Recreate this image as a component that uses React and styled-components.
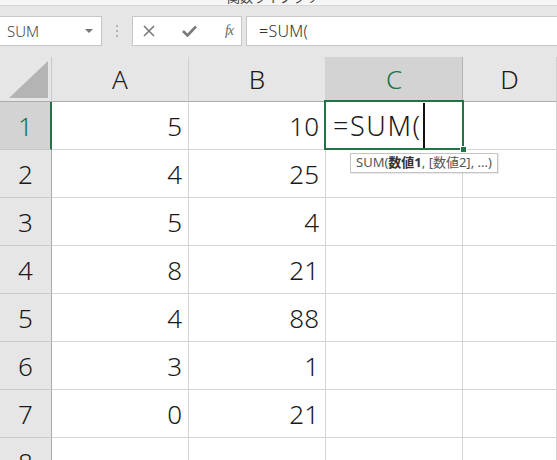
import React from "react";
import styled, { createGlobalStyle } from "styled-components";

const GlobalStyle = createGlobalStyle`
  html, body {
    margin: 0;
    padding: 0;
    background: #ffffff;
    overflow: hidden;
  }
  body {
    font-family: "Noto Sans", "Noto Sans CJK JP", sans-serif;
    color: #222;
  }
`;

const GREEN = "#217346";

const Window = styled.div`
  width: 557px;
  height: 460px;
  overflow: hidden;
  display: flex;
  flex-direction: column;
`;

const TitleStrip = styled.div`
  height: 5px;
  flex: none;
  background: #f6f6f6;
  border-bottom: 1px solid #d6d6d6;
  overflow: hidden;
  padding-left: 227px;

  span {
    display: block;
    margin-top: -10px;
    font-family: "Noto Sans CJK JP", sans-serif;
    font-size: 13px;
    line-height: 14px;
    color: #444;
  }
`;

const FormulaBar = styled.div`
  height: 51px;
  flex: none;
  box-sizing: border-box;
  background: #e6e6e6;
  padding-top: 10px;
  display: flex;
  align-items: flex-start;
`;

const Box = styled.div`
  height: 30px;
  box-sizing: border-box;
  background: #fff;
  border: 1px solid #c6c6c6;
  display: flex;
  align-items: center;
`;

const NameBox = styled(Box)`
  width: 102px;
  border-left: none;
  padding: 0 6px 0 7px;
  justify-content: space-between;
  font-size: 15px;
  font-weight: 300;
  color: #444;

  i {
    width: 0;
    height: 0;
    border-left: 4px solid transparent;
    border-right: 4px solid transparent;
    border-top: 4px solid #777;
    margin-right: 2px;
  }
`;

const Grip = styled.div`
  width: 30px;
  height: 30px;
  display: flex;
  flex-direction: column;
  align-items: center;
  justify-content: center;
  gap: 3px;

  b {
    width: 2px;
    height: 2px;
    background: #b3b3b3;
  }
`;

const FxBox = styled(Box)`
  width: 110px;
  padding: 0 8px 0 10px;
  justify-content: space-between;
  color: #777;

  em {
    font-family: "Liberation Serif", serif;
    font-style: italic;
    font-size: 14px;
    color: #666;
    letter-spacing: -1px;
  }
`;

const FormulaInput = styled(Box)`
  flex: 1;
  margin-left: 4px;
  border-right: none;
  padding-left: 12px;
  font-size: 16px;
  font-weight: 300;
  color: #333;
  letter-spacing: 0.3px;
`;

const Sheet = styled.div`
  display: grid;
  grid-template-columns: 52px 137px 137px 137px 1fr;
  grid-template-rows: 45px;
  grid-auto-rows: 48px;
  font-size: 26px;
  font-weight: 300;
  color: #1a1a1a;
`;

const Corner = styled.div`
  background: #e6e6e6;
  box-sizing: border-box;
  border-right: 1px solid #c9c9c9;
  border-bottom: 1px solid #ababab;
  display: flex;
  align-items: flex-end;
  justify-content: flex-end;
  padding: 0 3px 3px 0;
`;

const ColHeader = styled.div`
  box-sizing: border-box;
  background: ${(p) => (p.$selected ? "#d3d3d3" : "#e6e6e6")};
  color: ${(p) => (p.$selected ? GREEN : "#1a1a1a")};
  border-right: 1px solid ${(p) => (p.$selected ? "#b5b5b5" : "#d0d0d0")};
  border-bottom: ${(p) => (p.$selected ? `2px solid ${GREEN}` : "1px solid #ababab")};
  display: flex;
  align-items: center;
  justify-content: center;
  padding-top: ${(p) => (p.$selected ? "1px" : "0")};
`;

const RowHeader = styled.div`
  box-sizing: border-box;
  background: ${(p) => (p.$selected ? "#d3d3d3" : "#e6e6e6")};
  color: ${(p) => (p.$selected ? GREEN : "#1a1a1a")};
  border-right: ${(p) => (p.$selected ? `2px solid ${GREEN}` : "1px solid #ababab")};
  border-bottom: 1px solid #c9c9c9;
  display: flex;
  align-items: center;
  justify-content: center;
  padding-left: ${(p) => (p.$selected ? "1px" : "0")};
`;

const Cell = styled.div`
  box-sizing: border-box;
  border-right: 1px solid #d4d4d4;
  border-bottom: 1px solid #d4d4d4;
  display: flex;
  align-items: center;
  justify-content: flex-end;
  padding-right: 6px;
`;

const ActiveCell = styled(Cell)`
  position: relative;
  justify-content: flex-start;
  padding: 0 0 0 7px;
  font-size: 27px;
  letter-spacing: 1.6px;
`;

const ActiveFrame = styled.div`
  position: absolute;
  top: -2px;
  left: -2px;
  right: -2px;
  bottom: -1px;
  border: 2px solid ${GREEN};
  pointer-events: none;
`;

const FillHandle = styled.div`
  position: absolute;
  right: -5px;
  bottom: -4px;
  width: 5px;
  height: 5px;
  background: ${GREEN};
  border: 1px solid #fff;
`;

const Caret = styled.span`
  display: inline-block;
  width: 2px;
  height: 45px;
  background: #111;
  margin-left: 1px;
  align-self: flex-end;
  margin-bottom: 1px;
`;

const Tooltip = styled.div`
  position: absolute;
  left: 24px;
  top: 51px;
  z-index: 2;
  white-space: nowrap;
  background: #fff;
  border: 1px solid #c4c4c4;
  box-shadow: 1px 1px 1px rgba(0, 0, 0, 0.08);
  padding: 1px 5px 2px 5px;
  font-size: 13px;
  font-weight: 400;
  line-height: 15px;
  letter-spacing: 0;
  color: #555;
  font-family: "Noto Sans", "Noto Sans CJK JP", sans-serif;

  b {
    color: #333;
  }
`;

const data = [
  [5, 10],
  [4, 25],
  [5, 4],
  [8, 21],
  [4, 88],
  [3, 1],
  [0, 21],
  ["", ""],
];

const columns = ["A", "B", "C", "D"];

const CloseIcon = () => (
  <svg width="12" height="12" viewBox="0 0 12 12">
    <path d="M1 1 L11 11 M11 1 L1 11" stroke="#7a7a7a" strokeWidth="1.6" fill="none" />
  </svg>
);

const CheckIcon = () => (
  <svg width="15" height="12" viewBox="0 0 15 12">
    <path d="M1 6 L5.5 10.5 L14 1.5" stroke="#7a7a7a" strokeWidth="2.6" fill="none" />
  </svg>
);

const SelectAll = () => (
  <svg width="39" height="37" viewBox="0 0 39 37">
    <polygon points="0,37 39,37 39,0" fill="#b4b4b4" />
  </svg>
);

const App = () => {
  return (
    <Window>
      <GlobalStyle />
      <TitleStrip>
        <span>関数ライブラリ</span>
      </TitleStrip>
      <FormulaBar>
        <NameBox>
          SUM
          <i />
        </NameBox>
        <Grip>
          <b />
          <b />
          <b />
        </Grip>
        <FxBox>
          <CloseIcon />
          <CheckIcon />
          <em>fx</em>
        </FxBox>
        <FormulaInput>=SUM(</FormulaInput>
      </FormulaBar>

      <Sheet>
        <Corner>
          <SelectAll />
        </Corner>
        {columns.map((c) => (
          <ColHeader key={c} $selected={c === "C"}>
            {c}
          </ColHeader>
        ))}

        {data.map((row, i) => (
          <React.Fragment key={i}>
            <RowHeader $selected={i === 0}>{i + 1}</RowHeader>
            <Cell>{row[0]}</Cell>
            <Cell>{row[1]}</Cell>
            {i === 0 ? (
              <ActiveCell>
                =SUM(
                <Caret />
                <ActiveFrame />
                <FillHandle />
                <Tooltip>
                  SUM(<b>数値1</b>, [数値2], ...)
                </Tooltip>
              </ActiveCell>
            ) : (
              <Cell />
            )}
            <Cell />
          </React.Fragment>
        ))}
      </Sheet>
    </Window>
  );
};

export default App;
